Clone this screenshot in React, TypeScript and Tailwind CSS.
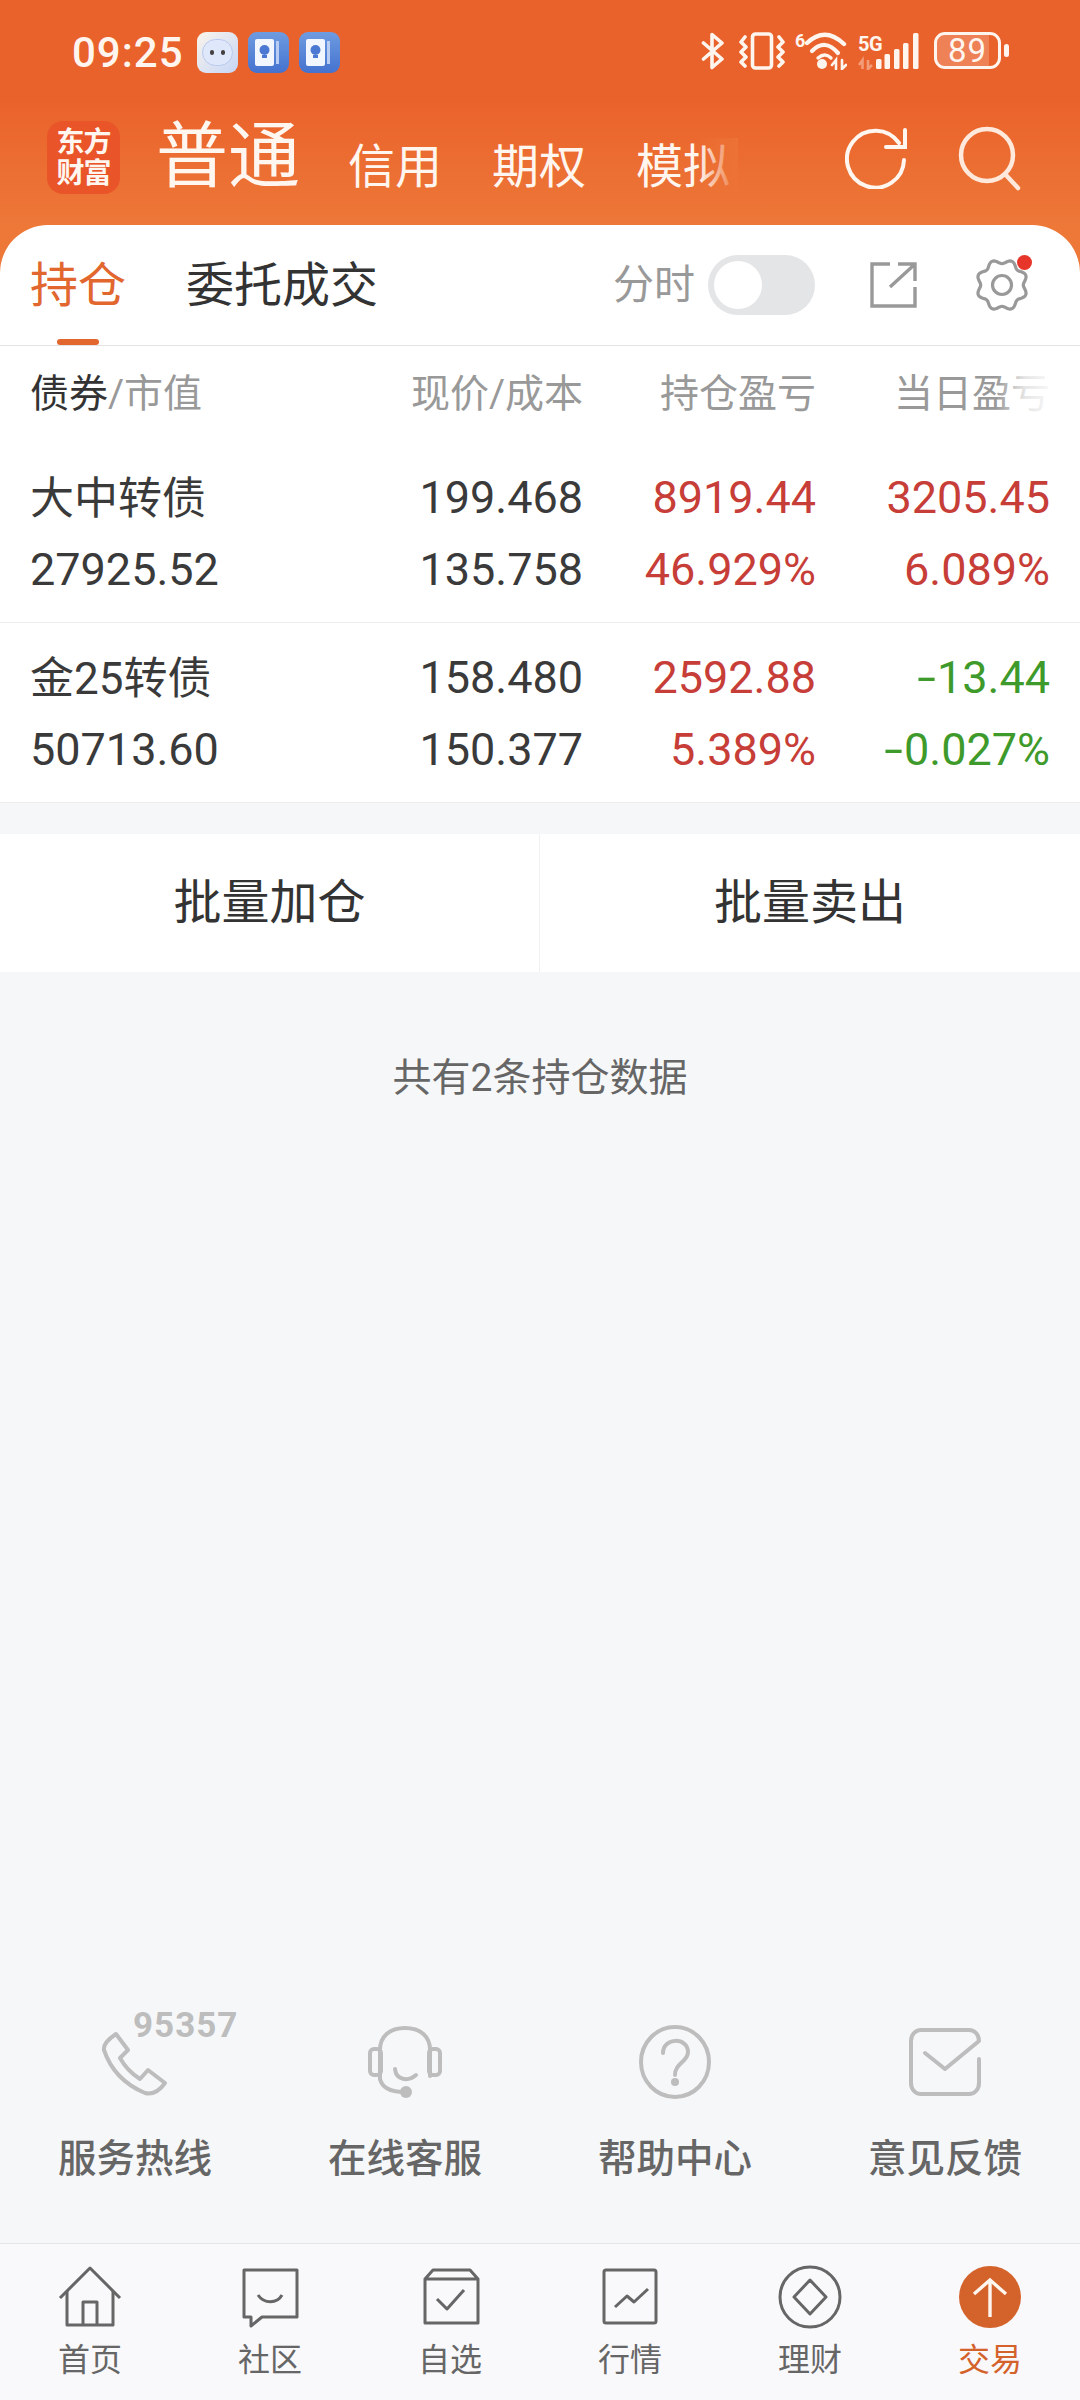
import React from 'react';

const FONT = 'font-["Roboto","Noto_Sans_CJK_SC",sans-serif]';

// scalloped gear outline
const gearPath = (() => {
  const pts: string[] = [];
  for (let i = 0; i < 120; i++) {
    const a = (i / 120) * Math.PI * 2;
    const r = 23.5 + 2.2 * Math.cos(8 * a + Math.PI);
    pts.push(`${(27 + r * Math.cos(a)).toFixed(2)} ${(27 + r * Math.sin(a)).toFixed(2)}`);
  }
  return `M${pts.join('L')}Z`;
})();

const TipIcon = () => (
  <div className="w-[41px] h-[41px] rounded-[9px] bg-gradient-to-b from-[#6f9be0] to-[#4472cf] flex items-center justify-center">
    <svg width="28" height="27" viewBox="0 0 28 27">
      <rect x="0" y="0" width="19" height="27" rx="2" fill="#f2f6fe" />
      <rect x="21" y="2" width="3" height="23" fill="#b9cdf2" />
      <circle cx="9.5" cy="11" r="5" fill="#4b78d2" />
      <rect x="7" y="16" width="5" height="3" fill="#4b78d2" />
    </svg>
  </div>
);

const RobotIcon = () => (
  <div className="w-[41px] h-[41px] rounded-[9px] bg-gradient-to-br from-[#fbf4ea] to-[#c6d6f6] flex items-center justify-center">
    <div className="w-[31px] h-[27px] rounded-full bg-[#dfe8fb] border border-[#b8c8ee] flex items-center justify-center gap-[7px]">
      <div className="w-[4px] h-[5px] rounded-full bg-[#44403f]" />
      <div className="w-[4px] h-[5px] rounded-full bg-[#44403f]" />
    </div>
  </div>
);

const StatusBar = () => (
  <div className="h-[104px] flex items-center pl-[72px] pr-[71px] pt-[1px] text-[#fff5ef]">
    <span className="text-[42px] font-medium leading-none tracking-[1px] w-[125px]">09:25</span>
    <div className="flex gap-[10px]">
      <RobotIcon />
      <TipIcon />
      <TipIcon />
    </div>
    <div className="ml-auto mb-[4px] flex items-center">
      {/* bluetooth */}
      <svg width="24" height="38" viewBox="0 0 24 38" fill="none" stroke="currentColor" strokeWidth="3.6" strokeLinejoin="round" strokeLinecap="round">
        <path d="M2.5 11 21 27 11 35.5V2.5L21 11 2.5 27" />
      </svg>
      {/* vibrate */}
      <svg className="ml-[14px]" width="46" height="38" viewBox="0 0 46 38" fill="none" stroke="currentColor" strokeWidth="3.6" strokeLinejoin="round" strokeLinecap="round">
        <rect x="13.5" y="2" width="19" height="34" rx="3" />
        <path d="M6 5 2 10 7 15 2 20 7 25 2 30 6 34" />
        <path d="M40 5 44 10 39 15 44 20 39 25 44 30 40 34" />
      </svg>
      {/* wifi */}
      <div className="relative ml-[10px] w-[52px] h-[38px]">
        <span className="absolute left-0 top-[-1px] text-[18px] font-bold leading-[20px]">6</span>
        <svg width="52" height="38" viewBox="0 0 52 38" fill="none" stroke="currentColor" strokeLinecap="round">
          <path d="M12 11Q30 -6 49 12" strokeWidth="4.4" />
          <path d="M17 19Q30 6 43 21" strokeWidth="4.2" />
          <path d="M23 26Q30 20 36 26" strokeWidth="3.4" />
          <circle cx="27" cy="32" r="5" fill="currentColor" stroke="none" />
          <path d="M41 37V28L37 33M47 28V37L51 33" strokeWidth="2.6" />
        </svg>
      </div>
      {/* 5G + signal */}
      <div className="relative ml-[11px] w-[61px] h-[38px]">
        <span className="absolute left-0 top-[2px] text-[20px] font-bold leading-[20px] tracking-[-0.5px]">5G</span>
        <svg width="61" height="38" viewBox="0 0 61 38" fill="currentColor">
          <path d="M4.5 37V28L1 33M10 28V37L14 33" fill="none" stroke="currentColor" strokeOpacity="0.4" strokeWidth="2.6" />
          <rect x="18" y="27" width="5.5" height="10" rx="1.5" />
          <rect x="26.5" y="22" width="5.5" height="15" rx="1.5" />
          <rect x="36" y="17" width="5.5" height="20" rx="1.5" />
          <rect x="45" y="11" width="5.5" height="26" rx="1.5" />
          <rect x="55" y="1" width="5.5" height="36" rx="1.5" />
        </svg>
      </div>
      {/* battery */}
      <div className="ml-[15px] relative w-[67px] h-[37px] rounded-[11px] border-[3px] border-[#fff5ef] flex items-center">
        <div className="absolute left-0 top-0 bottom-0 w-[52px] rounded-l-[8px] bg-white/20" />
        <span className="relative ml-[11px] text-[33px] leading-none tracking-[1px]">89</span>
      </div>
      <div className="ml-[3px] w-[5px] h-[13px] rounded-full bg-[#fff5ef]" />
    </div>
  </div>
);

const TitleBar = () => (
  <div className="relative h-[121px] flex items-start pl-[47px] text-[#fff6f0]">
    <div className="mt-[17px] w-[73px] h-[73px] rounded-[16px] bg-[#e95529] flex flex-col items-center justify-center font-bold text-[28px] leading-[31px] tracking-[-1px]">
      <span>东方</span>
      <span>财富</span>
    </div>
    <span className="ml-[36px] mt-[17px] text-[72px] leading-[72px]">普通</span>
    <div className="ml-[48px] mt-[38px] flex gap-[50px] text-[47px] leading-[50px]">
      <span>信用</span>
      <span>期权</span>
      <span>模拟</span>
    </div>
    <div className="absolute left-[698px] top-[34px] w-[40px] h-[56px] bg-gradient-to-r from-[#ec703400] to-[#ec7235]" />
    <svg className="absolute left-[845px] top-[23px]" width="62" height="62" viewBox="0 0 62 62" fill="none" stroke="#fff6f0" strokeWidth="4" strokeLinecap="round">
      <path d="M59 33A28.5 28.5 0 1 1 54 16" />
      <path d="M41 20H60V3" />
    </svg>
    <svg className="absolute left-[958px] top-[21px]" width="64" height="66" viewBox="0 0 64 66" fill="none" stroke="#ffe9dc" strokeWidth="4.5" strokeLinecap="round">
      <circle cx="29" cy="30" r="26" />
      <path d="M47 49 60 63" />
    </svg>
  </div>
);

const TabRow = () => (
  <div className="relative h-[121px] rounded-t-[48px] bg-white border-b border-[#e3e3e3] flex items-center pl-[30px] pr-[51px]">
    <span className="text-[48px] leading-none text-[#e2672f] mt-[2px]">持仓</span>
    <span className="ml-[60px] text-[48px] leading-none text-[#333] mt-[2px]">委托成交</span>
    <span className="ml-auto text-[41px] leading-none text-[#999] mt-[1px]">分时</span>
    <div className="ml-[13px] w-[107px] h-[60px] rounded-full bg-[#e4e5e7] p-[6px]">
      <div className="w-[48px] h-[48px] rounded-full bg-white" />
    </div>
    <svg className="ml-[55px]" width="48" height="46" viewBox="0 0 48 46" fill="none" stroke="#999" strokeWidth="3.4">
      <path d="M20 2H2V44H45V25" />
      <path d="M20 25 44 3M28 2H45V19" />
    </svg>
    <svg className="ml-[57px]" width="54" height="54" viewBox="0 0 54 54" fill="none" stroke="#999" strokeWidth="3.2">
      <path d={gearPath} />
      <circle cx="27" cy="27" r="9.5" />
    </svg>
    <div className="absolute left-[1017px] top-[30px] w-[15px] h-[15px] rounded-full bg-[#e8352a]" />
    <div className="absolute left-[57px] bottom-0 w-[42px] h-[6px] rounded-full bg-[#e2672f]" />
  </div>
);

type Row = { name: string; mv: string; price: string; cost: string; pl: string; plPct: string; day: string; dayPct: string };

const rows: Row[] = [
  { name: '大中转债', mv: '27925.52', price: '199.468', cost: '135.758', pl: '8919.44', plPct: '46.929%', day: '3205.45', dayPct: '6.089%' },
  { name: '金25转债', mv: '50713.60', price: '158.480', cost: '150.377', pl: '2592.88', plPct: '5.389%', day: '-13.44', dayPct: '-0.027%' },
];

// the minus sign is drawn longer than the font's hyphen
const Signed = ({ value }: { value: string }) =>
  value.startsWith('-') ? (
    <>
      <span className="inline-block w-[21px] text-center scale-x-[1.5]">-</span>
      {value.slice(1)}
    </>
  ) : (
    <>{value}</>
  );

const PositionRow = ({ row }: { row: Row }) => {
  const dayColor = row.day.startsWith('-') ? 'text-[#3f9a2c]' : 'text-[#c73d37]';
  return (
    <div className="h-[180px] bg-white pl-[30px] pr-[31px] py-[18px] grid grid-cols-[301px_252px_233px_234px] grid-rows-[72px_72px] items-center text-[45px] leading-none text-[#3a3a3a] border-b border-[#ededed]">
      <span className="mt-[3px] text-[44px]">{row.name}</span>
      <span className="text-right">{row.price}</span>
      <span className="text-right text-[#c73d37]">{row.pl}</span>
      <span className={`text-right ${dayColor}`}>
        <Signed value={row.day} />
      </span>
      <span>{row.mv}</span>
      <span className="text-right">{row.cost}</span>
      <span className="text-right text-[#c73d37]">{row.plPct}</span>
      <span className={`text-right ${dayColor}`}>
        <Signed value={row.dayPct} />
      </span>
    </div>
  );
};

const PositionTable = () => (
  <div>
    <div className="relative h-[97px] bg-white pl-[30px] pr-[31px] grid grid-cols-[301px_252px_233px_234px] items-center text-[39px] leading-none text-[#999]">
      <span>
        <span className="text-[#333]">债券</span>/市值
      </span>
      <span className="text-right">现价/成本</span>
      <span className="text-right">持仓盈亏</span>
      <span className="text-right">当日盈亏</span>
      <div className="absolute right-[26px] top-[24px] w-[58px] h-[50px] bg-gradient-to-r from-[#ffffff00] via-[#ffffffc0] to-[#fffffff0]" />
    </div>
    {rows.map((row) => (
      <PositionRow key={row.name} row={row} />
    ))}
  </div>
);

const BatchButtons = () => (
  <div className="mt-[31px] h-[138px] bg-white grid grid-cols-2 text-[48px] leading-none text-[#333]">
    <div className="flex items-center justify-center border-r border-[#f1f1f1]">批量加仓</div>
    <div className="flex items-center justify-center">批量卖出</div>
  </div>
);

const SERVICE_STROKE = '#bdbdbd';

const PhoneIcon = () => (
  <svg width="72" height="72" viewBox="0 0 72 72" fill="none" stroke={SERVICE_STROKE} strokeWidth="4" strokeLinejoin="round">
    <path d="M17 9 29 25 21 33C26 42 33 49 41 54L49 45 66 58C61 65 54 70 46 68 27 60 12 46 5 25 4 19 11 13 17 9Z" transform="translate(0 -1)" />
  </svg>
);

const HeadsetIcon = () => (
  <svg width="74" height="72" viewBox="0 0 74 72" fill="none" stroke={SERVICE_STROKE} strokeWidth="4" strokeLinecap="round" strokeLinejoin="round">
    <path d="M12 53V24C12 10 22 2 37 2S62 10 62 24V50" />
    <rect x="2" y="23" width="11" height="26" rx="4" />
    <rect x="61" y="23" width="11" height="26" rx="4" />
    <path d="M12 53C14 61 22 66 36 66" />
    <path d="M27 43C28 54 40 56 48 49" />
    <circle cx="38" cy="66" r="6" fill={SERVICE_STROKE} stroke="none" />
  </svg>
);

const QuestionIcon = () => (
  <svg width="72" height="74" viewBox="0 0 72 74" fill="none" stroke={SERVICE_STROKE} strokeWidth="4" strokeLinecap="round">
    <ellipse cx="36" cy="37" rx="34" ry="35" />
    <path d="M24 28C24 12 49 12 49 27 49 37 36 38 36 50" />
    <circle cx="36" cy="57" r="4" fill={SERVICE_STROKE} stroke="none" />
  </svg>
);

const MailIcon = () => (
  <svg width="74" height="68" viewBox="0 0 74 68" fill="none" stroke={SERVICE_STROKE} strokeWidth="4" strokeLinecap="round" strokeLinejoin="round">
    <path d="M71 31V55C71 61 67 66 61 66H13C7 66 3 61 3 55V13C3 7 7 2 13 2H61C67 2 71 7 71 13L37 41 17 25" />
  </svg>
);

const services = [
  { label: '服务热线', icon: <PhoneIcon /> },
  { label: '在线客服', icon: <HeadsetIcon /> },
  { label: '帮助中心', icon: <QuestionIcon /> },
  { label: '意见反馈', icon: <MailIcon /> },
];

const ServiceRow = () => (
  <div className="mt-auto pb-[54px] grid grid-cols-4">
    {services.map((s, i) => (
      <div key={s.label} className="relative flex flex-col items-center">
        <div className="h-[74px] flex items-center justify-center">{s.icon}</div>
        <span className="mt-[30px] text-[38.5px] font-medium leading-[60px] text-[#666]">{s.label}</span>
        {i === 0 && (
          <span className="absolute left-[133px] -top-[19px] text-[35px] leading-[40px] font-bold tracking-[1px] text-[#bdbdbd]">95357</span>
        )}
      </div>
    ))}
  </div>
);

const navItems = [
  {
    label: '首页',
    icon: (
      <>
        <path d="M2 33 32 3 62 33" />
        <path d="M9 26V60H55V26" />
        <path d="M25 60V37H39V60" />
      </>
    ),
  },
  {
    label: '社区',
    icon: (
      <>
        <path d="M6 5H59V52H24L13 61V52H6Z" />
        <path d="M20 30C26 39 39 39 44 30" />
      </>
    ),
  },
  {
    label: '自选',
    icon: (
      <>
        <path d="M7 14V58H60V14L52 5H15L7 14H60" />
        <path d="M19 34 29 44 46 25" />
      </>
    ),
  },
  {
    label: '行情',
    icon: (
      <>
        <rect x="6" y="5" width="52" height="53" rx="2" />
        <path d="M17 42 29 31 36 37 50 24" />
      </>
    ),
  },
  {
    label: '理财',
    icon: (
      <>
        <circle cx="32" cy="32" r="30" />
        <path d="M32 15 48 32 32 49 16 32Z" />
      </>
    ),
  },
];

const BottomNav = () => (
  <div className="h-[157px] bg-[#f9f9fb] border-t border-[#e6e6e8] grid grid-cols-6">
    {navItems.map((item) => (
      <div key={item.label} className="flex flex-col items-center pt-[21px]">
        <svg width="64" height="64" viewBox="0 0 64 64" fill="none" stroke="#666" strokeWidth="3" strokeLinejoin="round">
          {item.icon}
        </svg>
        <span className="mt-[14px] text-[32px] leading-[34px] text-[#666]">{item.label}</span>
      </div>
    ))}
    <div className="flex flex-col items-center pt-[21px]">
      <svg width="64" height="64" viewBox="0 0 64 64" fill="none" stroke="#fff6ef" strokeWidth="3.4">
        <circle cx="32" cy="32" r="31" fill="#d4622b" stroke="none" />
        <path d="M32 52V15M16 29 32 15 48 29" />
      </svg>
      <span className="mt-[14px] text-[32px] leading-[34px] text-[#d4622b]">交易</span>
    </div>
  </div>
);

const App: React.FC = () => (
  <div className={`w-[1080px] h-[2400px] bg-[#f6f7f9] flex flex-col overflow-hidden ${FONT}`}>
    <div className="bg-[linear-gradient(180deg,#ea622b_100px,#ed7838_225px)]">
      <StatusBar />
      <TitleBar />
      <TabRow />
    </div>
    <PositionTable />
    <BatchButtons />
    <p className="mt-[84px] text-center text-[39px] leading-[44px] text-[#666]">共有2条持仓数据</p>
    <ServiceRow />
    <BottomNav />
  </div>
);

export default App;
